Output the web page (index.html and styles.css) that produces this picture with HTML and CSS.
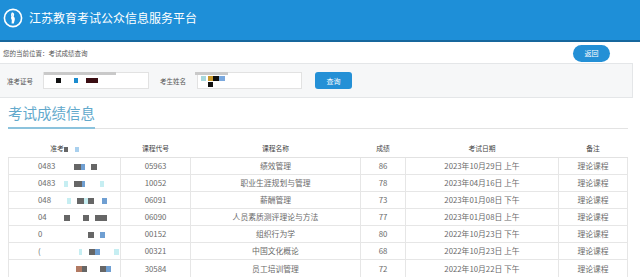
FILE: index.html
```html
<!DOCTYPE html>
<html lang="zh-CN">
<head>
<meta charset="utf-8">
<title>江苏教育考试公众信息服务平台</title>
<link rel="stylesheet" href="styles.css">
</head>
<body>
<header class="top">
  <svg class="logo" width="20" height="20" viewBox="0 0 20 20">
    <circle cx="10" cy="10" r="8.6" fill="none" stroke="#fff" stroke-width="1.6"/>
    <path d="M9 4.2 C10.8 4.6 11.6 6 11 7.4 L10.6 8.6 C11.8 9.4 12.2 11 11.6 12.6 L10.8 15.4 L8.6 15.4 L8.8 12 C8 11 7.8 9.6 8.4 8.6 C7.8 7.4 8 5.4 9 4.2 Z" fill="#fff"/>
    <path d="M9.6 5.6 L10.2 7.2 L9.4 8.2 Z" fill="#9fd0f0"/>
  </svg>
  <h1 class="title">江苏教育考试公众信息服务平台</h1>
</header>

<div class="crumb-bar">
  <span class="crumb">您的当前位置：考试成绩查询</span>
  <a class="back" href="#">返回</a>
</div>

<div class="search">
  <label class="lbl">准考证号</label>
  <div class="field f1">
    <span class="mask bar1"></span>
    <span class="blk k1"></span><span class="blk u1"></span><span class="blk r1"></span>
  </div>
  <label class="lbl lbl2">考生姓名</label>
  <div class="field f2">
    <span class="mask bar2"></span>
    <span class="blk c2"></span><span class="blk y2"></span><span class="blk k2"></span><span class="blk u2"></span><span class="blk k3"></span>
  </div>
  <button class="query">查询</button>
</div>

<div class="section">
  <h2 class="sec-title">考试成绩信息</h2>
</div>

<table class="scores">
  <colgroup>
    <col class="c-id"><col class="c-code"><col class="c-name"><col class="c-score"><col class="c-date"><col class="c-note">
  </colgroup>
  <thead>
    <tr><th>准考<span class="hb g"></span><span class="hb lb"></span></th><th>课程代号</th><th>课程名称</th><th>成绩</th><th>考试日期</th><th>备注</th></tr>
  </thead>
  <tbody>
    <tr><td class="id"><span class="num">0483</span><span class="rb g" style="margin-left:12px;width:7px"></span><span class="rb b" style="width:4px"></span><span class="rb g" style="margin-left:6px;width:6px"></span></td><td>05963</td><td>绩效管理</td><td>86</td><td>2023年10月29日 上午</td><td>理论课程</td></tr>
    <tr><td class="id"><span class="num">0483</span><span class="rb c" style="margin-left:2px;width:4px"></span><span class="rb g" style="margin-left:6px;width:8px"></span><span class="rb b" style="width:3px"></span><span class="rb c" style="margin-left:15px;width:4px"></span></td><td>10052</td><td>职业生涯规划与管理</td><td>78</td><td>2023年04月16日 上午</td><td>理论课程</td></tr>
    <tr><td class="id"><span class="num">048</span><span class="rb c" style="margin-left:5px;width:4px"></span><span class="rb g" style="margin-left:6px;width:7px"></span><span class="rb c" style="width:4px"></span><span class="rb g" style="width:6px"></span><span class="rb b" style="margin-left:8px;width:5px"></span></td><td>06091</td><td>薪酬管理</td><td>73</td><td>2023年01月08日 下午</td><td>理论课程</td></tr>
    <tr><td class="id"><span class="num">04</span><span class="rb g" style="margin-left:2px;width:6px"></span><span class="rb g" style="margin-left:13px;width:6px"></span><span class="rb g" style="margin-left:6px;width:12px"></span></td><td>06090</td><td>人员素质测评理论与方法</td><td>77</td><td>2023年01月08日 上午</td><td>理论课程</td></tr>
    <tr><td class="id"><span class="num">0</span><span class="rb g" style="margin-left:26px;width:6px"></span><span class="rb b" style="margin-left:6px;width:5px"></span></td><td>00152</td><td>组织行为学</td><td>80</td><td>2022年10月23日 下午</td><td>理论课程</td></tr>
    <tr><td class="id"><span class="num">(</span><span class="rb c" style="margin-left:17px;width:3px"></span><span class="rb g" style="margin-left:7px;width:6px"></span><span class="rb b" style="width:5px"></span><span class="rb c" style="margin-left:14px;width:5px"></span></td><td>00321</td><td>中国文化概论</td><td>68</td><td>2022年10月23日 上午</td><td>理论课程</td></tr>
    <tr><td class="id"><span class="num"></span><span class="rb br" style="margin-left:14px;width:6px"></span><span class="rb g" style="width:5px"></span><span class="rb g" style="margin-left:13px;width:6px"></span><span class="rb b" style="width:5px"></span></td><td>30584</td><td>员工培训管理</td><td>72</td><td>2022年10月22日 下午</td><td>理论课程</td></tr>
  </tbody>
</table>
</body>
</html>
```

FILE: styles.css
```css
* { box-sizing: border-box; }
html, body { margin: 0; padding: 0; }
body {
  width: 640px;
  height: 277px;
  overflow: hidden;
  background: #fff;
  font-family: "Noto Sans CJK SC", "Noto Sans", sans-serif;
  color: #666;
}

.top {
  height: 42px;
  background: #1e8fd8;
  border-bottom: 2px solid #17679d;
  display: flex;
  align-items: center;
  padding: 0 0 4px 3px;
}
.logo { display: block; }
.title {
  margin: 0 0 0 6px;
  font-size: 12px;
  font-weight: normal;
  color: #fff;
  letter-spacing: 0;
  line-height: 1;
}

.crumb-bar {
  height: 21px;
  display: flex;
  align-items: center;
  justify-content: space-between;
  padding: 0 30px 0 3px;
}
.crumb {
  font-size: 6.5px;
  color: #555;
  line-height: 1;
  margin-top: 1px;
}
.back {
  width: 37px;
  height: 17px;
  border-radius: 9px;
  background: #2490d6;
  color: #fff;
  font-size: 7px;
  text-decoration: none;
  display: flex;
  align-items: center;
  justify-content: center;
  margin-top: 1px;
}

.search {
  width: 633px;
  height: 35px;
  background: #f6f7f8;
  border: 1px solid #e4e6e8;
  border-left: 0;
  display: flex;
  align-items: center;
  padding-left: 7px;
}
.lbl {
  font-size: 6.5px;
  color: #555;
  width: 36px;
}
.lbl2 { width: 37px; margin-left: 11px; }
.field {
  position: relative;
  height: 17px;
  background: #fff;
  border: 1px solid #e2e2e2;
}
.f1 { width: 106px; }
.f2 { width: 105px; }
.mask { position: absolute; top: -1px; height: 3px; background: #c9c9c9; }
.bar1 { left: 0; width: 72px; }
.bar2 { left: -3px; width: 33px; }
.blk { position: absolute; height: 5px; }
.k1 { left: 12px; top: 5px; width: 5px; background: #111; }
.u1 { left: 30px; top: 5px; width: 4px; background: #1b8ccf; }
.r1 { left: 42px; top: 5px; width: 12px; background: #3a0d12; }
.c2 { left: 3px; top: 3px; width: 5px; background: #a8d8dc; }
.y2 { left: 10px; top: 3px; width: 5px; background: #c99a2e; }
.k2 { left: 15px; top: 3px; width: 6px; background: #111; }
.u2 { left: 21px; top: 3px; width: 6px; background: #7aa8de; }
.k3 { left: 10px; top: 9px; width: 5px; background: #111; }

.query {
  margin-left: 13px;
  width: 37px;
  height: 17px;
  border: 0;
  border-radius: 3px;
  background: #2490d6;
  color: #fff;
  font-family: inherit;
  font-size: 7px;
  padding: 0;
}

.section {
  margin: 0 12px 0 8px;
  height: 31px;
  border-bottom: 1px solid #e3e3e3;
  display: flex;
  align-items: flex-end;
}
.sec-title {
  margin: 0 0 -1px 0;
  font-size: 14.5px;
  font-weight: normal;
  color: #62a9cc;
  line-height: 1;
  padding-bottom: 7px;
  width: 87px;
  border-bottom: 2px solid #8cc3dd;
}

.scores {
  margin: 11px 0 0 8px;
  width: 619px;
  border-collapse: collapse;
  table-layout: fixed;
  font-size: 7.8px;
  color: #6a6a6a;
}
.c-id { width: 112px; }
.c-code { width: 70px; }
.c-name { width: 170px; }
.c-score { width: 45px; }
.c-date { width: 153px; }
.c-note { width: 69px; }

.scores th {
  height: 17px;
  padding: 0;
  font-size: 6.8px;
  font-weight: normal;
  color: #444;
  border-bottom: 1px solid #e2e2e2;
  line-height: 1;
}
.scores td {
  height: 17.17px;
  padding: 0;
  text-align: center;
  border: 1px solid #e6e6e6;
  line-height: 1;
  white-space: nowrap;
}
.scores td.id { text-align: left; padding-left: 29px; }
.num { display: inline-block; width: 24px; }
.rb { display: inline-block; height: 6px; vertical-align: middle; }
.hb { display: inline-block; width: 4px; height: 5px; vertical-align: middle; }
.hb.lb { margin-left: 7px; }
.g { background: #666; }
.b { background: #6f9fd2; }
.c { background: #c6eef2; }
.br { background: #b27a63; }
.lb { background: #a9d0ee; }
```
